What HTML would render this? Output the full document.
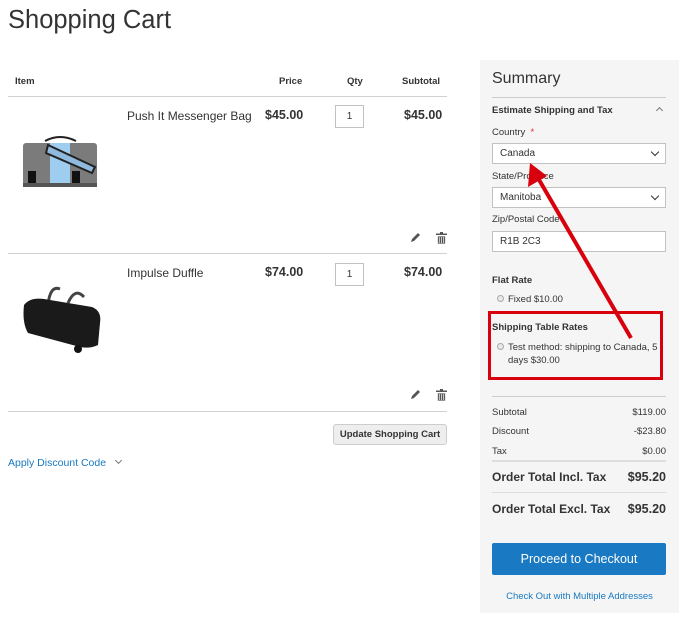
<!DOCTYPE html>
<html><head><meta charset="utf-8"><style>
*{margin:0;padding:0;box-sizing:border-box}
body{width:685px;height:618px;background:#fff;font-family:"Liberation Sans",sans-serif;color:#333;position:relative;overflow:hidden}
.a{position:absolute;white-space:nowrap}
.b{font-weight:bold}
.line{position:absolute;height:1px;background:#d1d1d1}
.qty{position:absolute;width:29px;height:23px;border:1px solid #c2c2c2;background:#fff;font-size:10px;text-align:center;line-height:21px}
.sel{position:absolute;left:492px;width:174px;height:21px;border:1px solid #c2c2c2;background:#fff;font-size:10px;padding-left:7px;line-height:19px;color:#333}
.chev{position:absolute;right:7px;top:5px;width:6px;height:6px;border-right:1px solid #333;border-bottom:1px solid #333;transform:rotate(45deg)}
.radio{position:absolute;width:7px;height:7px;border-radius:50%;border:1px solid #aaa;background:#e8e8e8}
</style></head><body>
<div class="a" style="left:8px;top:6px;font-size:25.5px;color:#333;font-weight:300">Shopping Cart</div>

<div class="a b" style="left:15px;top:76px;font-size:9.5px">Item</div>
<div class="a b" style="left:279px;top:76px;font-size:9.5px">Price</div>
<div class="a b" style="left:347px;top:76px;font-size:9.5px">Qty</div>
<div class="a b" style="left:402px;top:76px;font-size:9.5px">Subtotal</div>
<div class="line" style="left:8px;top:96px;width:439px"></div>

<!-- row1 -->
<svg class="a" style="left:20px;top:135px" width="82" height="58" viewBox="0 0 82 58">
<path d="M25 6 Q40 -2 56 6" stroke="#222" stroke-width="2" fill="none"/>
<rect x="3" y="8" width="74" height="44" rx="3" fill="#7b7b7b"/>
<rect x="30" y="8" width="20" height="44" fill="#9fcdf0"/>
<path d="M28 10 L75 32 L72 38 L26 18 Z" fill="#8fb9dd" stroke="#222" stroke-width="2"/>
<rect x="8" y="36" width="8" height="14" fill="#111"/><rect x="52" y="36" width="8" height="14" fill="#111"/>
<rect x="3" y="48" width="74" height="4" fill="#555"/>
</svg>
<div class="a" style="left:127px;top:109px;font-size:12px">Push It Messenger Bag</div>
<div class="a b" style="left:265px;top:108px;font-size:12.5px">$45.00</div>
<div class="qty" style="left:335px;top:105px">1</div>
<div class="a b" style="left:404px;top:108px;font-size:12.5px">$45.00</div>
<svg class="a" style="left:409px;top:232px" width="12" height="12" viewBox="0 0 12 12"><path d="M2 10 L3 7 L9 1 L11 3 L5 9 Z" fill="#555"/></svg>
<svg class="a" style="left:436px;top:232px" width="11" height="12" viewBox="0 0 11 12"><rect x="0" y="1.5" width="11" height="1.5" fill="#555"/><rect x="4" y="0" width="3" height="2" fill="#555"/><path d="M1.5 4 H9.5 V12 H1.5Z M3.3 5 V11 M5.5 5 V11 M7.7 5 V11" fill="#555" stroke="#fff" stroke-width=".7"/></svg>
<div class="line" style="left:8px;top:253px;width:439px"></div>

<!-- row2 -->
<svg class="a" style="left:20px;top:283px" width="82" height="72" viewBox="0 0 82 72">
<path d="M28 22 Q30 2 40 6 M48 20 Q55 4 64 14" stroke="#444" stroke-width="3" fill="none"/>
<path d="M4 22 Q10 14 24 16 L72 24 Q82 28 80 40 L78 62 Q70 66 60 64 L8 50 Q2 40 4 22Z" fill="#1a1a1a"/>
<circle cx="58" cy="66" r="4" fill="#111"/>
</svg>
<div class="a" style="left:127px;top:266px;font-size:12px">Impulse Duffle</div>
<div class="a b" style="left:265px;top:265px;font-size:12.5px">$74.00</div>
<div class="qty" style="left:335px;top:263px">1</div>
<div class="a b" style="left:404px;top:265px;font-size:12.5px">$74.00</div>
<svg class="a" style="left:409px;top:389px" width="12" height="12" viewBox="0 0 12 12"><path d="M2 10 L3 7 L9 1 L11 3 L5 9 Z" fill="#555"/></svg>
<svg class="a" style="left:436px;top:389px" width="11" height="12" viewBox="0 0 11 12"><rect x="0" y="1.5" width="11" height="1.5" fill="#555"/><rect x="4" y="0" width="3" height="2" fill="#555"/><path d="M1.5 4 H9.5 V12 H1.5Z M3.3 5 V11 M5.5 5 V11 M7.7 5 V11" fill="#555" stroke="#fff" stroke-width=".7"/></svg>
<div class="line" style="left:8px;top:411px;width:439px"></div>

<div class="a b" style="left:333px;top:424px;width:114px;height:21px;background:#eee;border:1px solid #cdcdcd;border-radius:3px;font-size:9.5px;text-align:center;line-height:19px;color:#333">Update Shopping Cart</div>
<div class="a" style="left:8px;top:457px;font-size:10.5px;color:#1979c3">Apply Discount Code</div>
<div class="a" style="left:116px;top:458px;width:5px;height:5px;border-right:1px solid #777;border-bottom:1px solid #777;transform:rotate(45deg)"></div>

<!-- summary -->
<div class="a" style="left:480px;top:60px;width:199px;height:553px;background:#f5f5f5"></div>
<div class="a" style="left:492px;top:70px;font-size:16px;font-weight:300;color:#333">Summary</div>
<div class="line" style="left:492px;top:97px;width:174px;background:#ccc"></div>
<div class="a b" style="left:492px;top:105px;font-size:9.5px">Estimate Shipping and Tax</div>
<div class="a" style="left:657px;top:108px;width:5px;height:5px;border-left:1px solid #777;border-top:1px solid #777;transform:rotate(45deg)"></div>
<div class="a" style="left:492px;top:127px;font-size:9.5px">Country <span style="color:#e02b27">&nbsp;*</span></div>
<div class="sel" style="top:143px">Canada<div class="chev"></div></div>
<div class="a" style="left:492px;top:171px;font-size:9.5px">State/Province</div>
<div class="sel" style="top:187px">Manitoba<div class="chev"></div></div>
<div class="a" style="left:492px;top:214px;font-size:9.5px">Zip/Postal Code</div>
<div class="sel" style="top:231px">R1B 2C3</div>
<div class="a b" style="left:492px;top:275px;font-size:9.5px">Flat Rate</div>
<div class="radio" style="left:497px;top:295px"></div>
<div class="a" style="left:508px;top:294px;font-size:9.5px">Fixed $10.00</div>
<div class="a b" style="left:492px;top:322px;font-size:9.5px">Shipping Table Rates</div>
<div class="radio" style="left:497px;top:343px"></div>
<div class="a" style="left:508px;top:342px;font-size:9.5px;line-height:12.5px">Test method: shipping to Canada, 5<br>days $30.00</div>
<div class="a" style="left:488px;top:311px;width:175px;height:69px;border:3px solid #d9000d"></div>

<div class="line" style="left:492px;top:396px;width:174px;background:#ccc"></div>
<div class="a" style="left:492px;top:407px;font-size:9.5px">Subtotal</div><div class="a" style="right:19px;top:407px;font-size:9.5px">$119.00</div>
<div class="a" style="left:492px;top:426px;font-size:9.5px">Discount</div><div class="a" style="right:19px;top:426px;font-size:9.5px">-$23.80</div>
<div class="a" style="left:492px;top:446px;font-size:9.5px">Tax</div><div class="a" style="right:19px;top:446px;font-size:9.5px">$0.00</div>
<div class="line" style="left:492px;top:460px;width:174px;height:2px;background:#ddd"></div>
<div class="a b" style="left:492px;top:470px;font-size:12px">Order Total Incl. Tax</div><div class="a b" style="right:19px;top:470px;font-size:12.5px">$95.20</div>
<div class="line" style="left:492px;top:492px;width:174px;background:#ddd"></div>
<div class="a b" style="left:492px;top:502px;font-size:12px">Order Total Excl. Tax</div><div class="a b" style="right:19px;top:502px;font-size:12.5px">$95.20</div>
<div class="a" style="left:492px;top:543px;width:174px;height:32px;background:#1979c3;border-radius:2px;color:#fff;font-size:12.5px;text-align:center;line-height:32px">Proceed to Checkout</div>
<div class="a" style="left:480px;top:591px;width:199px;text-align:center;font-size:9.5px;color:#1979c3">Check Out with Multiple Addresses</div>

<svg class="a" style="left:0;top:0" width="685" height="618">
<line x1="631" y1="338" x2="538" y2="178" stroke="#d9000d" stroke-width="4"/>
<polygon points="530,163 528,187 547,176" fill="#d9000d"/>
</svg>
</body></html>
